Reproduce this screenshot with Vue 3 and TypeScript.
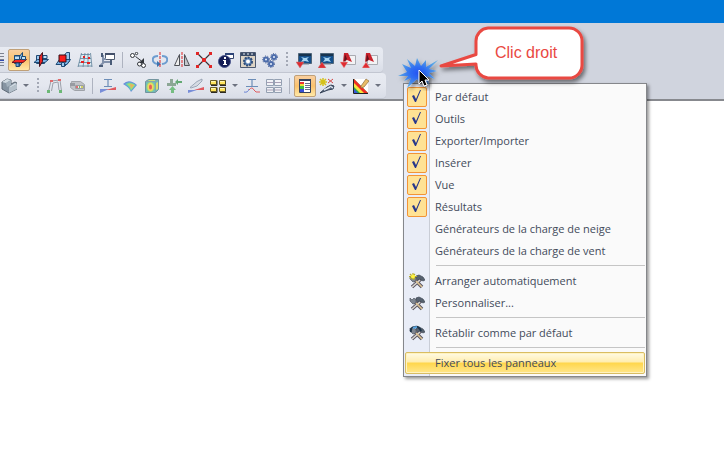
<script setup lang="ts">
import { reactive } from 'vue'

interface Tool {
  kind: 'tool' | 'arrow' | 'sep' | 'grip'
  icon?: string
  label?: string
  active?: boolean
  dim?: boolean
}

const tool = (icon: string, label: string, opts: Partial<Tool> = {}): Tool => ({ kind: 'tool', icon, label, ...opts })
const sep: Tool = { kind: 'sep' }
const grip: Tool = { kind: 'grip' }
const arrow: Tool = { kind: 'arrow', label: 'Plus' }
const dim = { dim: true }

const mainTools: Tool[] = [
  tool('plane-xy', 'Plan XY', { active: true }),
  tool('plane-yz', 'Plan YZ'),
  tool('plane-xz', 'Plan XZ'),
  tool('mesh', 'Grille'),
  tool('snap', 'Accrochage'),
  sep,
  tool('move', 'Déplacer'),
  tool('rotate', 'Pivoter'),
  tool('mirror', 'Symétrie'),
  tool('nodes', 'Connecter'),
  tool('info', 'Informations'),
  tool('settings', 'Paramètres'),
  tool('gears', 'Options'),
  grip,
  tool('screen-down', 'Exporter'),
  tool('screen-up', 'Importer'),
  tool('sheet-down', 'Exporter la feuille'),
  tool('sheet-up', 'Importer la feuille'),
]

const resultTools: Tool[] = [
  tool('solid', 'Solide', dim),
  arrow,
  grip,
  tool('frame', 'Cadre', dim),
  tool('values', 'Valeurs', dim),
  sep,
  tool('section', 'Section', dim),
  tool('surface', 'Surface', dim),
  tool('cube', 'Volume', dim),
  tool('forces', 'Forces', dim),
  tool('diagram', 'Diagramme', dim),
  tool('windows', 'Fenêtres'),
  arrow,
  tool('curve', 'Courbe', dim),
  tool('table', 'Tableaux', dim),
  sep,
  tool('panel', 'Panneau', { active: true }),
  tool('wand', 'Assistant'),
  arrow,
  tool('colors', 'Couleurs'),
  arrow,
]

const toolbars = [
  { id: 'main', tools: mainTools },
  { id: 'results', tools: resultTools },
]

const panels = reactive([
  { label: 'Par défaut', checked: true },
  { label: 'Outils', checked: true },
  { label: 'Exporter/Importer', checked: true },
  { label: 'Insérer', checked: true },
  { label: 'Vue', checked: true },
  { label: 'Résultats', checked: true },
  { label: 'Générateurs de la charge de neige', checked: false },
  { label: 'Générateurs de la charge de vent', checked: false },
])

const actionGroups = [
  [
    { label: 'Arranger automatiquement', icon: 'arrange', hot: false },
    { label: 'Personnaliser...', icon: 'customize', hot: false },
  ],
  [{ label: 'Rétablir comme par défaut', icon: 'reset', hot: false }],
  [{ label: 'Fixer tous les panneaux', icon: '', hot: true }],
]
</script>

<template>
  <div class="app">
    <svg class="symbols" aria-hidden="true">
      <symbol id="plane-xy" viewBox="0 0 16 16">
        <path d="M3.5 3.500h7v8h-7z" fill="#9cc8ee" stroke="#1f4a75" />
        <path d="M8.500 4.500l3-4v9l-3 5z" fill="#8fc0ea" stroke="#1f4a75" />
        <path d="M1 10.500l3.500-3h11l-3.500 3z" fill="#f02424" stroke="#6a1420" />
        <path d="M3.500 4v3.500h5V4zM10.500 4.500h4v3h-4z" fill="#c0e0f8" stroke="#1f4a75" />
        <path d="M5 11h3v3.500H5z" fill="#6aa5df" stroke="#1f4a75" />
      </symbol>
      <symbol id="plane-yz" viewBox="0 0 16 16">
        <path d="M3.500 3.500h8v8h-8z" fill="#9cc8ee" stroke="#1f4a75" />
        <path d="M1 10.500l3.500-3h11l-3.500 3z" fill="#79b1e4" stroke="#1f4a75" />
        <path d="M6.500 4.500l3-4v9l-3 5z" fill="#e82424" stroke="#46131d" />
        <path d="M10 3.500h4v3h-4z" fill="#c0e0f8" stroke="#1f4a75" />
      </symbol>
      <symbol id="plane-xz" viewBox="0 0 16 16">
        <path d="M8.500 4.500l3-4h3v9l-5 5z" fill="#9cc8ee" stroke="#1f4a75" />
        <path d="M1 12.500l3.500-5h11l-3.500 5z" fill="#79b1e4" stroke="#1f4a75" />
        <path d="M4 3h7v7H4z" fill="#fb1d1d" stroke="#331019" />
        <path d="M6.500 10.500h3v4h-3z" fill="#9cc8ee" stroke="#1f4a75" />
      </symbol>
      <symbol id="mesh" viewBox="0 0 16 16">
        <path d="M4 2h9l2 12H1z" fill="#dce9f2" />
        <path d="M4 2.500h9M3 6.500h11M2 10.500h12M1 14h14M4.500 1L1 15M8 1L6 15M11 1v14M13.500 1L15 15" fill="none" stroke="#5e8098" stroke-width=".8" />
        <path d="M6 4h2v2H6zM11 5h2v2h-2zM4 9h3v2H4zM10 10h3v2h-3z" fill="#e82020" />
      </symbol>
      <symbol id="snap" viewBox="0 0 16 16">
        <path d="M6.500 1.500h9v6h-9z" fill="#fff" stroke="#505c70" />
        <path d="M6 1h10v2H6z" fill="#43506a" />
        <path d="M4 3v7h8M5 10l-4 4M3 7h4" stroke="#8291ab" stroke-width="2" fill="none" />
        <path d="M0 14h4M12 8v5M3 1v4" stroke="#4a5c78" stroke-width="2" />
      </symbol>
      <symbol id="move" viewBox="0 0 16 16">
        <g fill="#fff" stroke="#30343a">
          <circle cx="2.500" cy="3.500" r="2" /><circle cx="6.500" cy="1.500" r="1.200" />
          <circle cx="9.500" cy="12" r="2" /><circle cx="13.500" cy="13.500" r="2" />
          <path d="M5.500 4.500l6 4.500" fill="none" />
        </g>
        <path d="M14 6v5H9z" fill="#30343a" />
      </symbol>
      <symbol id="rotate" viewBox="0 0 16 16">
        <path d="M6 12C-1 11-1 4 6 4M10 4c7 0 7 7 0 8" fill="none" stroke="#6d9dd0" stroke-width="2" />
        <path d="M5 9l4 3-4 3z" fill="#3e73ad" />
        <path d="M8 0v16" stroke="#e02525" stroke-dasharray="3 1" />
      </symbol>
      <symbol id="mirror" viewBox="0 0 16 16">
        <path d="M5.500 2.500v11h-5z" fill="#eee" stroke="#4e5056" />
        <path d="M10.500 2.500v11h5z" fill="#c3c5ca" stroke="#4e5056" />
        <path d="M8 0v16" stroke="#e02525" stroke-dasharray="3 1" />
      </symbol>
      <symbol id="nodes" viewBox="0 0 16 16">
        <path d="M2 2l12 12M14 2L2 14" stroke="#3b3035" stroke-width="1.200" />
        <path d="M0 0h3v3H0zM13 0h3v3h-3zM0 13h3v3H0zM13 13h3v3h-3zM6 6h4v4H6z" fill="#e12626" />
      </symbol>
      <symbol id="info" viewBox="0 0 16 16">
        <path d="M7.500 1.500h8v5h-8z" fill="#fff" stroke="#34446d" /><path d="M7 1h9v2H7z" fill="#2d4478" />
        <circle cx="6.500" cy="9.500" r="6" fill="#141d56" stroke="#4a568d" />
        <path d="M6 5h2v2H6zM5 8h3v4h1v1H5v-1h1V9H5z" fill="#fff" />
      </symbol>
      <symbol id="settings" viewBox="0 0 16 16">
        <path d="M.5.500h15v15H.5z" fill="#dcd3c4" stroke="#4b5972" /><path d="M1 1h14v3H1z" fill="#384a66" />
        <path d="M3 2h2M7 2h2M11 2h2" stroke="#e8edf5" />
        <circle cx="8" cy="9.500" r="4" fill="#5f86b8" stroke="#2d4b78" stroke-width="2" stroke-dasharray="2 1" />
        <circle cx="8" cy="9.500" r="2" fill="#fff" />
      </symbol>
      <symbol id="gears" viewBox="0 0 16 16">
        <g fill="#e8f0fc" stroke="#4c6cab" stroke-width="2">
          <circle cx="4" cy="7.500" r="2" /><circle cx="12" cy="5" r="2" /><circle cx="9" cy="12" r="2" />
        </g>
        <g fill="none" stroke="#36518c" stroke-dasharray="1 1.500">
          <circle cx="4" cy="7.500" r="3.500" /><circle cx="12" cy="5" r="3.500" /><circle cx="9" cy="12" r="3.500" />
        </g>
      </symbol>
      <symbol id="screen" viewBox="0 0 16 16">
        <path d="M2.500 1.500h13v10h-13z" fill="#14508c" stroke="#4f6579" />
        <path d="M3 2h12v2H3z" fill="#173450" />
        <path d="M5 5l4 1 4-1-2 2 2 3-4-1-4 1 2-3z" fill="#a7d6f4" />
        <path d="M5 12h8" stroke="#7a8797" />
      </symbol>
      <symbol id="screen-down" viewBox="0 0 16 16"><use href="#screen" /><path d="M0 10h8l-4 6z" fill="#df2c32" stroke="#c77a7c" stroke-width=".5" /></symbol>
      <symbol id="screen-up" viewBox="0 0 16 16"><use href="#screen" /><path d="M0 16h8l-4-6z" fill="#df2c32" stroke="#c77a7c" stroke-width=".5" /></symbol>
      <symbol id="sheet" viewBox="0 0 16 16">
        <path d="M5.500 3.500h10v9h-10z" fill="#f3f3f5" stroke="#a9abb2" />
        <path d="M4 1h4l4 9-5-2-4 2z" fill="#c9202b" /><path d="M5 2l2 5-3 3z" fill="#60121c" />
      </symbol>
      <symbol id="sheet-down" viewBox="0 0 16 16"><use href="#sheet" /><path d="M0 10h8l-4 6z" fill="#df2c32" stroke="#eab5b5" stroke-width=".5" /></symbol>
      <symbol id="sheet-up" viewBox="0 0 16 16"><use href="#sheet" /><path d="M0 16h8l-4-6z" fill="#df2c32" stroke="#eab5b5" stroke-width=".5" /></symbol>

      <symbol id="solid" viewBox="0 0 16 16">
        <path d="M1 4l5-3 4 1v4l4-2 2 1v6l-8 4-7-4z" fill="#6f8090" stroke="#3c4a57" />
        <path d="M1 4l5-3 4 1-5 3zM8 9l6-4 2 1-7 4z" fill="#cdd8e0" />
        <path d="M5 5l5-3v5l-4 2z" fill="#93a4b1" /><path d="M8 10l8-4v5l-8 4z" fill="#a9b7c2" />
      </symbol>
      <symbol id="frame" viewBox="0 0 16 16">
        <path d="M1.500 13L4 3l9-1 1.500 11M4.500 13L6 5l5-1 1 8" fill="none" stroke="#8a8f99" />
        <path d="M3 2h3v2H3zM11 1h3v2h-3z" fill="#e24a4a" />
        <path d="M0 12h3v3H0zM12 12h3v3h-3z" fill="#4fae58" />
      </symbol>
      <symbol id="values" viewBox="0 0 16 16">
        <path d="M2.500 3.500h9l4 3v6h-10l-4-3z" fill="#b9bbbf" stroke="#8f9298" />
        <path d="M1 5h5v3H1z" fill="#85888e" />
        <path d="M6.500 7.500h8v3h-8z" fill="#eceded" stroke="#8a8d92" />
        <path d="M7 8h2v2H7z" fill="#d55" /><path d="M10 8h1v2h-1z" fill="#5a5" /><path d="M12 8h2v2h-2z" fill="#cc4" />
      </symbol>
      <symbol id="section" viewBox="0 0 16 16">
        <path d="M4 1.500h8M8 1v8M4 8.500h8" fill="none" stroke="#4f78ab" stroke-width="1.200" />
        <path d="M0 11h9l-9 4z" fill="#5f79d4" /><path d="M6 12l10-3v3z" fill="#e0383c" />
      </symbol>
      <symbol id="surface" viewBox="0 0 16 16">
        <path d="M1 6q6-6 14 1l-6 7Q7 9 1 6z" fill="#4d76d8" />
        <path d="M3 6q5-4 11 1l-5 6Q7 9 3 6z" fill="#42c1b0" />
        <path d="M5 6q4-2 8 1l-4 5Q8 8 5 6z" fill="#a2d94f" /><path d="M8 6l4 1-3 3z" fill="#f1a03e" />
      </symbol>
      <symbol id="cube" viewBox="0 0 16 16">
        <path d="M1.500 3.500l3-2h10v10l-3 3h-10z" fill="#51b7b0" stroke="#58818c" />
        <path d="M11.500 4v10M2 3.500h9.500l3-2" stroke="#72949b" fill="none" />
        <ellipse cx="6.500" cy="9" rx="4" ry="5" fill="#98d655" /><ellipse cx="6.500" cy="9" rx="3" ry="4" fill="#f2d540" /><ellipse cx="6.500" cy="9" rx="1.500" ry="2.500" fill="#e73e36" />
        <path d="M12 5l2-1v7l-2 1z" fill="#d8dc49" /><path d="M5 2h6v1H4z" fill="#c8dc59" />
      </symbol>
      <symbol id="forces" viewBox="0 0 16 16">
        <path d="M4 1h3v4h3v3H1V5h3z" fill="#77977f" />
        <path d="M9 4l3-3v2h4v2h-4v2z" fill="#439a54" /><path d="M5 15h3v-3h2L6.500 8 3 12h2z" fill="#5cb568" />
      </symbol>
      <symbol id="diagram" viewBox="0 0 16 16">
        <path d="M2 9.500l7-6 5-2.500v2L9 8l-6 2z" fill="#d3d8e1" stroke="#76869b" stroke-width=".8" />
        <path d="M0 12h9l-9 3z" fill="#5f79d4" /><path d="M6 12l10-3v3z" fill="#e0383c" />
      </symbol>
      <symbol id="windows" viewBox="0 0 16 16">
        <path d="M.5 2.500h6v4h-6zM9.500 2.500h6v4h-6zM.5 9.500h6v4h-6zM9.500 9.500h6v4h-6z" fill="#ffe45c" stroke="#6b5e25" />
        <path d="M1 7.500h6v-5M10 7.500h6v-5M1 14.500h6v-5M10 14.500h6v-5" fill="none" stroke="#2d2a20" />
        <path d="M1 3.500h4M10 3.500h4M1 10.500h4M10 10.500h4" stroke="#fff8b6" />
      </symbol>
      <symbol id="curve" viewBox="0 0 16 16">
        <path d="M4 1.500h8M8 1v8M2 8.500h12" fill="none" stroke="#4f78ab" stroke-width="1.200" />
        <path d="M0 14q4 1 5-3" fill="none" stroke="#4b6acd" /><path d="M5 12q3-4 5 0 1 3 6 2" fill="none" stroke="#e0383c" />
      </symbol>
      <symbol id="table" viewBox="0 0 16 16">
        <path d="M.5 1.500h7v6h-7zM8.500 1.500h7v6h-7zM.5 9.500h7v5h-7zM8.500 9.500h7v5h-7z" fill="#f4f5f8" stroke="#8290a4" />
        <path d="M1 4.500h6M9 4.500h6M1 12h6M9 12h6" stroke="#9b8fa8" />
      </symbol>
      <symbol id="panel" viewBox="0 0 16 16">
        <path d="M2.500 1.500h11v13h-11z" fill="#fff" stroke="#35435d" /><path d="M2 1h12v2H2z" fill="#35435d" />
        <path d="M3 4h4v2H3z" fill="#e93434" /><path d="M3 6h4v2H3z" fill="#eedd35" /><path d="M3 8h4v3H3z" fill="#3ebd48" /><path d="M3 11h4v3H3z" fill="#354ed4" />
        <path d="M8 5.500h5M8 7.500h5M8 9.500h5M8 11.500h5" stroke="#66728a" />
      </symbol>
      <symbol id="wand" viewBox="0 0 16 16">
        <path d="M4 0v8M0 4h8M1 1l6 6M7 1L1 7" stroke="#d5c21c" stroke-width="1.500" />
        <path d="M9 5l5-4M9 1l5 4" stroke="#d34747" />
        <path d="M1 15l7-6 4-2 3 1-1 3-5 1z" fill="#5a6980" stroke="#354257" /><path d="M5 12l6-3M11 8l3 2" stroke="#dfe7f0" stroke-width="1.500" />
      </symbol>
      <symbol id="colors" viewBox="0 0 16 16">
        <path d="M1 1h14v14H1z" fill="#fff" />
        <path d="M1 1l14 14H1z" fill="#2dab4a" />
        <path d="M1 1v5l9 9h5z" fill="#f02c24" /><path d="M1 5v4l6 6h4z" fill="#f5e53d" />
        <path d="M1 11v4h4z" fill="#3554d9" /><path d="M.5 1v14.500H15" stroke="#222" fill="none" />
        <path d="M8 8l5-7 3 2-5 6-3 1z" fill="#e9bd68" stroke="#8b6d40" stroke-width=".7" />
      </symbol>

      <symbol id="customize" viewBox="0 0 16 16">
        <path d="M3 14L12 6M13 14L5 6" stroke="#5b5662" stroke-width="3.500" />
        <path d="M1 3l2 2 2-2 2 2v3L4 9 1 6z" fill="#7e8590" stroke="#535a66" stroke-width=".7" />
        <path d="M7 3l3-1 4 2 2 3-2 1-3-2-2 1-2-2z" fill="#56616f" stroke="#3f4854" stroke-width=".7" />
        <path d="M3 14l8-7" stroke="#d9d6cf" stroke-width="1.600" /><path d="M13 14L7 8" stroke="#dfc493" stroke-width="1.600" />
      </symbol>
      <symbol id="arrange" viewBox="0 0 16 16">
        <use href="#customize" />
        <path d="M4 0v7M0 3.500h8M1 1l5 5M6 1L1 6" stroke="#b5ab2b" stroke-width="1.200" /><circle cx="4" cy="3.500" r="2" fill="#fff23e" />
      </symbol>
      <symbol id="reset" viewBox="0 0 16 16">
        <use href="#customize" />
        <path d="M2 7q-1-5 4-5 4-1 6 4" fill="none" stroke="#1b3247" stroke-width="2" /><path d="M4 3l4-1" stroke="#58a3df" stroke-width="2" />
      </symbol>
    </svg>

    <header class="title-bar"></header>

    <div class="toolbars">
      <div v-for="bar in toolbars" :key="bar.id" class="toolbar" :class="bar.id" role="toolbar">
        <template v-for="(item, i) in bar.tools" :key="i">
          <button v-if="item.kind === 'tool'" class="tool" :class="{ active: item.active, dim: item.dim }" :aria-label="item.label">
            <svg viewBox="0 0 16 16" aria-hidden="true"><use :href="'#' + item.icon" /></svg>
          </button>
          <button v-else-if="item.kind === 'arrow'" class="arrow" :aria-label="item.label"></button>
          <span v-else :class="item.kind"></span>
        </template>
      </div>
    </div>

    <main class="workspace"></main>

    <div class="menu" role="menu">
      <label v-for="panel in panels" :key="panel.label" class="item">
        <span class="gutter">
          <input v-model="panel.checked" type="checkbox" />
          <svg v-if="panel.checked" class="check" viewBox="0 0 20 20" aria-hidden="true">
            <path d="M5 9l2-1 2 4 4-9h1L9 15H8z" fill="#27378b" />
          </svg>
        </span>
        <span class="caption">{{ panel.label }}</span>
      </label>
      <template v-for="(group, g) in actionGroups" :key="g">
        <hr />
        <button v-for="action in group" :key="action.label" class="item" :class="{ hot: action.hot }" role="menuitem">
          <span class="gutter">
            <svg v-if="action.icon" class="glyph" viewBox="0 0 16 16" aria-hidden="true"><use :href="'#' + action.icon" /></svg>
          </span>
          <span class="caption">{{ action.label }}</span>
        </button>
      </template>
    </div>

    <svg class="callout" viewBox="0 0 200 110" role="img" aria-label="Clic droit">
      <defs>
        <radialGradient id="burst" cx="50%" cy="50%" r="50%">
          <stop offset="0" stop-color="#2454f4" /><stop offset=".4" stop-color="#2f6df2" /><stop offset="1" stop-color="#5aa8e4" />
        </radialGradient>
        <filter id="shade" x="-20%" y="-20%" width="150%" height="150%">
          <feDropShadow dx="2" dy="3" stdDeviation="2" flood-color="#000" flood-opacity=".5" />
        </filter>
      </defs>
      <path
        d="M8 61l9-4-5-8 9 4-4-9 8 7 2-8 4 8 5-6v7l12-7-9 9 8 2-8 2 6 6-8-3 2 9-6-7-3 5-3-4-10 9 4-10-7 3 4-5z"
        fill="url(#burst)" filter="url(#shade)"
      />
      <path
        d="M98 13h81a13 13 0 0 1 13 13v24a13 13 0 0 1-13 13H98a13 13 0 0 1-12-13v-1L51 51l35-11.500V26a13 13 0 0 1 12-13z"
        fill="#fff" stroke="#e94842" stroke-width="3" stroke-linejoin="round" filter="url(#shade)"
      />
      <text x="105" y="43">Clic droit</text>
      <path d="M29 55v14l3-3 2 5 3-1-2-5h4z" fill="#000" stroke="#fff" filter="url(#shade)" />
    </svg>
  </div>
</template>

<style>
body {
  margin: 0;
}
</style>

<style scoped>
.app {
  position: relative;
  display: flex;
  flex-direction: column;
  min-height: 100vh;
  overflow: hidden;
  background: #fff;
  font-family: "Open Sans", "Noto Sans", sans-serif;
  font-size: 11px;
  color: #434b5a;
}

.symbols {
  position: absolute;
  width: 0;
  height: 0;
}

.title-bar {
  height: 23px;
  background: #0078d7;
}

.toolbars {
  display: flex;
  flex-direction: column;
  align-items: flex-start;
  gap: 1px;
  padding: 24px 0 1px;
  background: #d0d4de;
  border-bottom: 2px solid #87898e;
}

.toolbar {
  display: flex;
  align-items: center;
  box-sizing: border-box;
  height: 25px;
  padding-right: 2px;
  border-radius: 0 4px 4px 0;
  background: linear-gradient(#e8ebf2, #e4e7ef 50%, #d9dde7);
  box-shadow: 0 1px #c2c6d1;
}

.main::before {
  content: "";
  width: 4px;
  height: 14px;
  margin-right: 4px;
  background:
    linear-gradient(transparent 7px, #3048b0 7px 8px, transparent 8px),
    repeating-linear-gradient(#7d8391 0 1px, transparent 1px 3px);
}

.results .tool:first-child {
  margin-left: -2px;
}

button {
  margin: 0;
  padding: 0;
  border: 0;
  background: none;
  font: inherit;
  color: inherit;
}

.tool {
  display: flex;
  align-items: center;
  justify-content: center;
  flex: none;
  box-sizing: border-box;
  width: 22px;
  height: 22px;
}

.tool svg {
  width: 16px;
  height: 16px;
}

.dim svg {
  opacity: 0.8;
}

.active {
  border: 1px solid #c0a078;
  border-radius: 2px;
  background: linear-gradient(#f9cfa0, #fbc26c 50%, #ffe9a8);
}

.sep {
  width: 1px;
  height: 16px;
  margin: 0 4px;
  background: #aeb3c0;
}

.grip {
  width: 2px;
  height: 16px;
  margin: 0 5px;
  background: repeating-linear-gradient(#a3a8b5 0 2px, transparent 2px 4px);
}

.arrow {
  display: flex;
  justify-content: center;
  width: 12px;
}

.arrow::before {
  content: "";
  border: 3px solid transparent;
  border-top-color: #6d7280;
  border-bottom: 0;
}

.workspace {
  flex: 1;
}

.menu {
  position: absolute;
  top: 83px;
  left: 403px;
  box-sizing: border-box;
  width: 244px;
  padding: 2px 1px;
  border: 1px solid #85878b;
  background: linear-gradient(90deg, #e9edf7 25px, #c9cdd6 25px 26px, #fafafa 26px);
  box-shadow: 2px 2px 3px rgba(0, 0, 0, 0.4);
}

.item {
  display: flex;
  align-items: center;
  box-sizing: border-box;
  width: 100%;
  height: 22px;
  text-align: left;
  white-space: nowrap;
}

.caption {
  padding-bottom: 2px;
}

.gutter {
  position: relative;
  display: flex;
  align-items: center;
  justify-content: center;
  flex: none;
  width: 24px;
  height: 20px;
  margin-right: 6px;
}

.gutter input {
  appearance: none;
  box-sizing: border-box;
  width: 20px;
  height: 20px;
  margin: 0;
  border-radius: 2px;
}

.gutter input:checked {
  border: 1px solid #f29436;
  background: #ffe294;
}

.check {
  position: absolute;
  width: 20px;
  height: 20px;
  pointer-events: none;
}

.glyph {
  width: 16px;
  height: 16px;
}

hr {
  height: 1px;
  margin: 3px 0 4px 31px;
  border: 0;
  background: #c5c5c5;
}

.hot {
  border: 1px solid #d9bd62;
  border-radius: 2px;
  background: linear-gradient(#fffbe5, #ffedaf 45%, #ffd64b 50%, #ffe78c);
  box-shadow: inset 0 0 0 1px #fff3c0;
}

.hot .gutter {
  width: 23px;
}

.callout {
  position: absolute;
  top: 15px;
  left: 390px;
  width: 200px;
  height: 110px;
  pointer-events: none;
}

.callout text {
  font: 16px "Liberation Sans", sans-serif;
  fill: #e94842;
}
</style>
